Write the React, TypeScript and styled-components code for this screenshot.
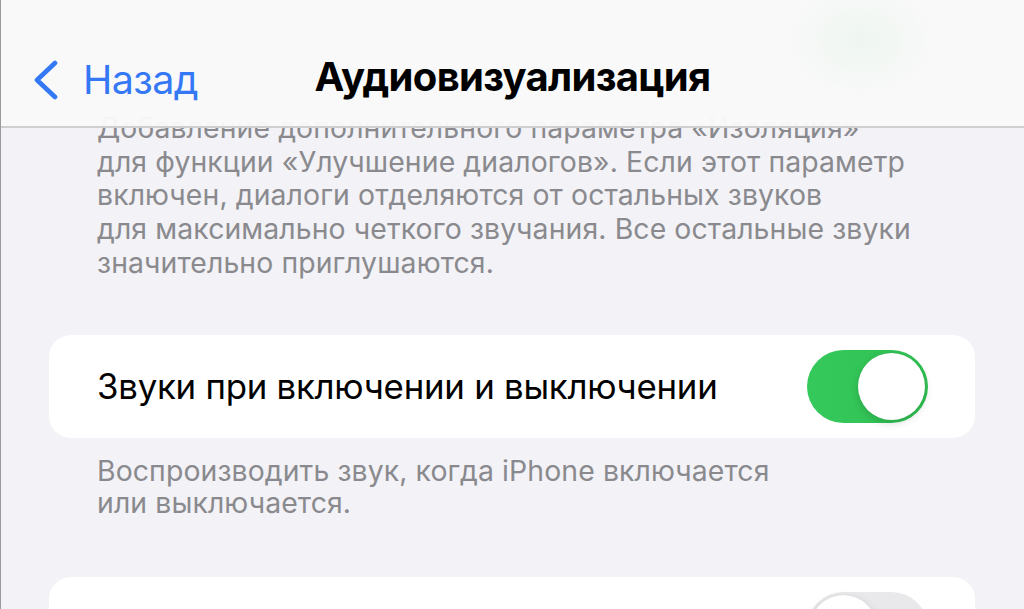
import React from "react";
import styled, { createGlobalStyle } from "styled-components";

const GlobalStyle = createGlobalStyle`
  html, body {
    margin: 0;
    padding: 0;
    background: #f2f2f7;
  }
  body {
    font-family: Inter, "Noto Sans", "DejaVu Sans", sans-serif;
    -webkit-font-smoothing: antialiased;
  }
`;

const Screen = styled.div`
  position: relative;
  width: 1024px;
  height: 609px;
  overflow: hidden;
  background: #f2f2f7;
  box-sizing: border-box;
  border-left: 1px solid #9a9a9e;
`;

const NavBar = styled.header`
  position: absolute;
  top: 0;
  left: 0;
  right: 0;
  height: 128px;
  box-sizing: border-box;
  display: flex;
  align-items: center;
  justify-content: center;
  padding-top: 26px;
  background:
    radial-gradient(ellipse 80px 60px at 860px 40px, rgba(226, 242, 230, 0.45), rgba(248, 249, 248, 0) 100%),
    rgba(249, 249, 249, 0.97);
  border-bottom: 2px solid #cfcfd2;
  z-index: 2;
`;

const BackButton = styled.button`
  position: absolute;
  left: 32px;
  top: 56px;
  display: flex;
  align-items: center;
  gap: 24px;
  border: none;
  background: none;
  padding: 0;
  color: #3478f6;
  font-family: inherit;
  font-size: 39.5px;
  letter-spacing: -0.6px;
  cursor: pointer;
`;

const Title = styled.h1`
  margin: 0;
  font-size: 40px;
  font-weight: 700;
  letter-spacing: -0.7px;
  color: #000;
`;

const Content = styled.main`
  display: flex;
  flex-direction: column;
  padding-top: 111px;
`;

const Note = styled.p<{ $top?: number }>`
  margin: ${(p) => p.$top ?? 0}px 0 0;
  padding: 0 40px 0 96px;
  font-size: 28.4px;
  line-height: 33.7px;
  color: #8a8a8e;
  letter-spacing: 0.1px;
  white-space: nowrap;
`;

const FooterNote = styled(Note)`
  font-size: 28.4px;
  line-height: 32.5px;
  letter-spacing: 0.1px;
`;

const Card = styled.section<{ $top: number }>`
  margin: ${(p) => p.$top}px 49px 0 48px;
  height: 103px;
  box-sizing: border-box;
  padding: 0 47px 0 48px;
  display: flex;
  align-items: center;
  justify-content: space-between;
  background: #fff;
  border-radius: 22px;
  flex-shrink: 0;
`;

const Label = styled.span`
  font-size: 34.8px;
  color: #000;
  letter-spacing: -0.25px;
`;

const Track = styled.div<{ $on: boolean }>`
  position: relative;
  width: 121px;
  height: 73px;
  border-radius: 37px;
  background: ${(p) => (p.$on ? "linear-gradient(90deg, #35c85a, #30c153)" : "#e9e9eb")};
  flex-shrink: 0;
  margin-left: auto;
`;

const Knob = styled.div<{ $on: boolean }>`
  position: absolute;
  top: 3px;
  ${(p) => (p.$on ? "right: 3px;" : "left: 3px;")}
  width: 67px;
  height: 67px;
  border-radius: 50%;
  background: #fff;
  box-shadow: 0 3px 8px rgba(0, 0, 0, 0.15), 0 0 1px rgba(0, 0, 0, 0.1);
`;

function Toggle({ on }: { on: boolean }) {
  return (
    <Track $on={on}>
      <Knob $on={on} />
    </Track>
  );
}

function Chevron() {
  return (
    <svg width="26" height="40" viewBox="0 0 26 40" fill="none">
      <path
        d="M22 3 L4 20 L22 37"
        stroke="#3478f6"
        strokeWidth="4.6"
        strokeLinecap="round"
        strokeLinejoin="round"
      />
    </svg>
  );
}

export default function App() {
  return (
    <>
      <GlobalStyle />
      <Screen>
        <NavBar>
          <BackButton>
            <Chevron />
            Назад
          </BackButton>
          <Title>Аудиовизуализация</Title>
        </NavBar>
        <Content>
          <Note>
            Добавление дополнительного параметра «Изоляция»
            <br />
            для функции «Улучшение диалогов». Если этот параметр
            <br />
            включен, диалоги отделяются от остальных звуков
            <br />
            для максимально четкого звучания. Все остальные звуки
            <br />
            значительно приглушаются.
          </Note>
          <Card $top={55}>
            <Label>Звуки при включении и выключении</Label>
            <Toggle on={true} />
          </Card>
          <FooterNote $top={17}>
            Воспроизводить звук, когда iPhone включается
            <br />
            или выключается.
          </FooterNote>
          <Card $top={57}>
            <Toggle on={false} />
          </Card>
        </Content>
      </Screen>
    </>
  );
}
